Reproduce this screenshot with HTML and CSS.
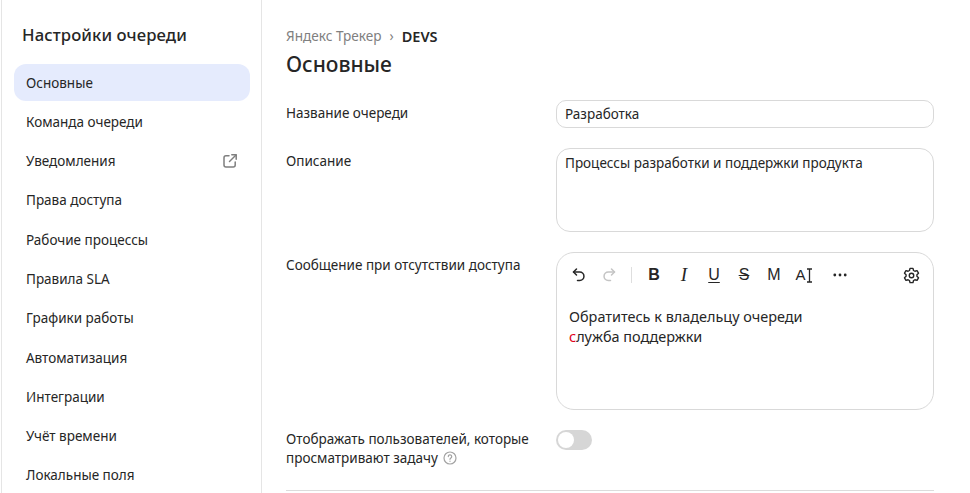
FILE: index.html
```html
<!DOCTYPE html>
<html lang="ru">
<head>
  <meta charset="UTF-8" />
  <meta name="viewport" content="width=device-width, initial-scale=1.0"/>
  <title>Настройки очереди</title>
  <link rel="stylesheet" href="styles.css">
</head>
<body>
  <div class="page">
    <aside class="sidebar">
      <h2 class="sidebar-title">Настройки очереди</h2>
      <nav class="menu">
        <a class="menu-item active">Основные</a>
        <a class="menu-item">Команда очереди</a>
        <a class="menu-item">Уведомления
          <svg class="ext-icon" width="16" height="16" viewBox="0 0 16 16" fill="none" stroke="#7f7f7f" stroke-width="1.5" stroke-linecap="round" stroke-linejoin="round"><path d="M7 2.800H4a2 2 0 0 0-2 2V12a2 2 0 0 0 2 2h7.200a2 2 0 0 0 2-2V9"/><path d="M9.800 1.800h4.400v4.400"/><path d="M14 2 7.500 8.500"/></svg>
        </a>
        <a class="menu-item">Права доступа</a>
        <a class="menu-item">Рабочие процессы</a>
        <a class="menu-item">Правила SLA</a>
        <a class="menu-item">Графики работы</a>
        <a class="menu-item">Автоматизация</a>
        <a class="menu-item">Интеграции</a>
        <a class="menu-item">Учёт времени</a>
        <a class="menu-item">Локальные поля</a>
      </nav>
    </aside>

    <main class="content">
      <div class="crumbs">
        <span class="crumb-link">Яндекс Трекер</span>
        <span class="crumb-sep">›</span>
        <span class="crumb-now">DEVS</span>
      </div>
      <h1 class="page-title">Основные</h1>

      <div class="form">
        <div class="row row-name">
          <div class="row-label">Название очереди</div>
          <div class="field field-name">Разработка</div>
        </div>
        <div class="row row-desc">
          <div class="row-label">Описание</div>
          <div class="field field-desc">Процессы разработки и поддержки продукта</div>
        </div>
        <div class="row row-msg">
          <div class="row-label">Сообщение при отсутствии доступа</div>
          <div class="editor">
            <div class="toolbar">
              <span class="tool">
                <svg width="16" height="16" viewBox="0 0 16 16" fill="none" stroke="#262626" stroke-width="1.5" stroke-linecap="round" stroke-linejoin="round"><path d="M5.500 2 2.500 5l3 3"/><path d="M2.500 5h6.200a4 4 0 0 1 0 8.500H6.500"/></svg>
              </span>
              <span class="tool">
                <svg width="16" height="16" viewBox="0 0 16 16" fill="none" stroke="#c4c4c4" stroke-width="1.5" stroke-linecap="round" stroke-linejoin="round"><path d="M10.500 2l3 3-3 3"/><path d="M13.500 5H7.300a4 4 0 0 0 0 8.500H9.500"/></svg>
              </span>
              <span class="tool-sep"></span>
              <span class="tool glyph glyph-b">B</span>
              <span class="tool glyph glyph-i">I</span>
              <span class="tool glyph glyph-u">U</span>
              <span class="tool glyph glyph-s">S</span>
              <span class="tool glyph glyph-m">M</span>
              <span class="tool glyph glyph-a">A<svg class="caret-mark" width="7" height="15" viewBox="0 0 7 15" fill="none" stroke="#262626" stroke-width="1.300"><path d="M1 1h5M3.500 1v13M1 14h5"/></svg></span>
              <span class="tool tool-more">
                <svg width="16" height="16" viewBox="0 0 16 16" fill="#262626"><circle cx="2.800" cy="8" r="1.400"/><circle cx="8" cy="8" r="1.400"/><circle cx="13.200" cy="8" r="1.400"/></svg>
              </span>
              <span class="tool tool-gear">
                <svg width="17" height="17" viewBox="0 0 16 16" fill="none" stroke="#262626" stroke-width="1.300" stroke-linejoin="round"><path d="M6.600 1.300h2.800l.5 2 1.300.7 2-.6 1.400 2.400-1.500 1.400v1.600l1.500 1.400-1.400 2.400-2-.6-1.300.7-.5 2H6.600l-.5-2-1.300-.7-2 .6-1.400-2.400 1.500-1.400V7.200L1.400 5.800l1.400-2.400 2 .6 1.300-.7z"/><circle cx="8" cy="8" r="2.100"/></svg>
              </span>
            </div>
            <div class="editor-text">
              <p>Обратитесь к владельцу очереди</p>
              <p><span class="typo">с</span>лужба поддержки</p>
            </div>
          </div>
        </div>
        <div class="row row-toggle">
          <div class="row-label">Отображать пользователей, которые просматривают задачу
            <svg class="help-icon" width="14" height="14" viewBox="0 0 14 14" fill="none" stroke="#a3a3a3" stroke-width="1.200" stroke-linecap="round"><circle cx="7" cy="7" r="6"/><path d="M5.300 5.600a1.700 1.700 0 1 1 2.600 1.400c-.6.400-.9.700-.9 1.300"/><path d="M7 10.200v.1"/></svg>
          </div>
          <div class="switch"><span class="knob"></span></div>
        </div>
      </div>
      <hr class="divider">
    </main>
  </div>
</body>
</html>
```

FILE: styles.css
```css
html, body { margin: 0; padding: 0; height: 100%; overflow: hidden; }
body { font-family: "Noto Sans", "Open Sans", Arial, sans-serif; font-size: 13.500px; line-height: 20px; color: #262626; background: #fff; }
.page { display: flex; height: 493px; margin-left: 1px; border-left: 1px solid #e5e5e5; }

.sidebar { flex: none; border-right: 1px solid #e5e5e5; padding: 0 11px 0 12px; box-sizing: content-box; width: 236px; }
.sidebar-title { margin: 24px 0 19px 8px; font-size: 16.700px; line-height: 21px; font-weight: 500; letter-spacing: 0.1px; }
.menu { display: flex; flex-direction: column; gap: 2.300px; }
.menu-item { display: flex; align-items: center; justify-content: space-between; height: 37px; padding: 0 12px; border-radius: 12px; flex: none; }
.menu-item.active { background: #e5ebfd; }

.content { flex: 1; padding: 0 36px 0 24px; }
.crumbs { display: flex; align-items: center; gap: 8px; margin-top: 26px; height: 20px; }
.crumb-link { font-size: 13.600px; color: #808080; }
.crumb-sep { color: #808080; }
.crumb-now { font-size: 14.500px; font-weight: 600; }
.page-title { margin: 5px 0 0; font-size: 21px; line-height: 27px; font-weight: 500; }

.form { margin-top: 22px; }
.row { display: flex; }
.row-label { width: 270px; flex: none; padding-top: 3px; }
.row-desc { margin-top: 20px; }
.row-msg { margin-top: 20px; }
.row-toggle { margin-top: 20px; }
.row-toggle .row-label { width: 260px; padding-top: 0; margin-right: 10px; line-height: 19px; }
.help-icon { vertical-align: -2px; margin-left: 2px; }

.field { flex: 1; box-sizing: border-box; border: 1px solid #d9d9d9; padding: 0 8px; }
.field-name { height: 28px; line-height: 26px; border-radius: 10px; }
.field-desc { height: 84px; padding-top: 4px; border-radius: 14px; }

.editor { flex: 1; box-sizing: border-box; height: 158px; border: 1px solid #d9d9d9; border-radius: 18px; padding: 0 12px; }
.toolbar { display: flex; align-items: center; height: 44px; }
.tool { display: flex; width: 30px; height: 20px; flex: none; align-items: center; justify-content: center; }
.tool:first-child { margin-left: -5px; }
.tool-sep { width: 1px; height: 16px; background: #dedede; margin: 0 7px 0 7px; }
.glyph { font-family: "Liberation Sans", Arial, sans-serif; font-size: 16px; color: #262626; }
.glyph-b { font-weight: 700; }
.glyph-i { font-family: "Liberation Serif", serif; font-style: italic; font-size: 19px; }
.glyph-u { text-decoration: underline; text-underline-offset: 2px; }
.glyph-s { text-decoration: line-through; }
.glyph-a { font-size: 15px; }
.tool-more { margin-left: 6px; }
.tool-gear { margin-left: auto; margin-right: -5px; }

.editor-text { padding-top: 10px; font-size: 14.450px; }
.editor-text p { margin: 0; line-height: 20px; }
.typo { color: #e0001b; }

.switch { width: 36px; height: 20px; border-radius: 10px; background: #d6d6d6; position: relative; }
.knob { position: absolute; left: 2px; top: 2px; width: 16px; height: 16px; border-radius: 50%; background: #fff; }

.divider { margin: 22px 0 0; border: 0; border-top: 1px solid #dcdcdc; }
```
